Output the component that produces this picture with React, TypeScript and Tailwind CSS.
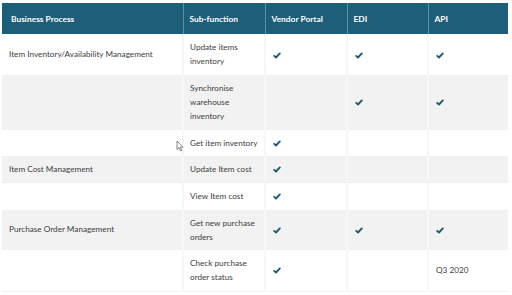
const Check = () => (
  <svg width="8" height="7" viewBox="0 0 8 7" className="inline-block">
    <path d="M1.2 3.9 L3 5.5 L6.8 1.4" fill="none" stroke="#1d5a73" strokeWidth="1.9" strokeLinecap="round" strokeLinejoin="round" />
  </svg>
);

type Row = {
  process: string;
  sub: string[];
  vendor: boolean;
  edi: boolean;
  api: boolean | string;
  h: string;
};

const rows: Row[] = [
  { process: 'Item Inventory/Availability Management', sub: ['Update items', 'inventory'], vendor: true, edi: true, api: true, h: 'h-[41px]' },
  { process: '', sub: ['Synchronise', 'warehouse', 'inventory'], vendor: false, edi: true, api: true, h: 'h-[54px]' },
  { process: '', sub: ['Get item inventory'], vendor: true, edi: false, api: false, h: 'h-[27px]' },
  { process: 'Item Cost Management', sub: ['Update Item cost'], vendor: true, edi: false, api: false, h: 'h-[26px]' },
  { process: '', sub: ['View Item cost'], vendor: true, edi: false, api: false, h: 'h-[28px]' },
  { process: 'Purchase Order Management', sub: ['Get new purchase', 'orders'], vendor: true, edi: true, api: true, h: 'h-[39px]' },
  { process: '', sub: ['Check purchase', 'order status'], vendor: true, edi: false, api: 'Q3 2020', h: 'h-[42px]' },
];

const App: React.FC = () => {
  return (
    <div className="relative w-[512px] h-[295px] bg-white overflow-hidden pt-[3px] pl-[2px]" style={{ fontFamily: 'Lato, "Noto Sans", sans-serif' }}>
      <table className="w-[506px] border-collapse table-fixed text-[8.2px] text-[#3d3d3d]">
        <colgroup>
          <col className="w-[181px]" />
          <col className="w-[82px]" />
          <col className="w-[82px]" />
          <col className="w-[81px]" />
          <col className="w-[80px]" />
        </colgroup>
        <thead>
          <tr className="h-[31px] bg-[#1d5e78] text-white font-black text-left text-[8.4px]">
            <th className="pl-[9px] pt-[1px] border-r border-[#5f8fa2]">Business Process</th>
            <th className="pl-[6px] pt-[1px] border-r border-[#5f8fa2]">Sub-function</th>
            <th className="pl-[6px] pt-[1px] border-r border-[#5f8fa2]">Vendor Portal</th>
            <th className="pl-[6px] pt-[1px] border-r border-[#5f8fa2]">EDI</th>
            <th className="pl-[6px] pt-[1px]">API</th>
          </tr>
        </thead>
        <tbody>
          {rows.map((r, i) => (
            <tr key={i} className={`${r.h} ${i % 2 === 1 ? 'bg-[#f2f2f2]' : 'bg-white'} border-b border-[#f0f0f0]`}>
              <td className="pl-[7px] border-r-2 border-[#f7f7f7] align-middle">{r.process}</td>
              <td className="pl-[6px] border-r-2 border-[#f7f7f7] leading-[14px] align-middle">
                {r.sub.map((s) => (
                  <div key={s}>{s}</div>
                ))}
              </td>
              <td className="pl-[7px] border-r-2 border-[#f7f7f7] align-middle">{r.vendor && <Check />}</td>
              <td className="pl-[7px] border-r-2 border-[#f7f7f7] align-middle">{r.edi && <Check />}</td>
              <td className="pl-[7px] align-middle">{r.api === true ? <Check /> : r.api || null}</td>
            </tr>
          ))}
        </tbody>
      </table>
      <svg className="absolute left-[176px] top-[140px]" width="8" height="12" viewBox="0 0 8 12">
        <path d="M1 1 L1 9.5 L3 7.6 L4.6 11 L5.8 10.4 L4.3 7.2 L7 7.2 Z" fill="white" stroke="#666" strokeWidth="0.8" strokeLinejoin="round" />
      </svg>
    </div>
  );
};

export default App;
